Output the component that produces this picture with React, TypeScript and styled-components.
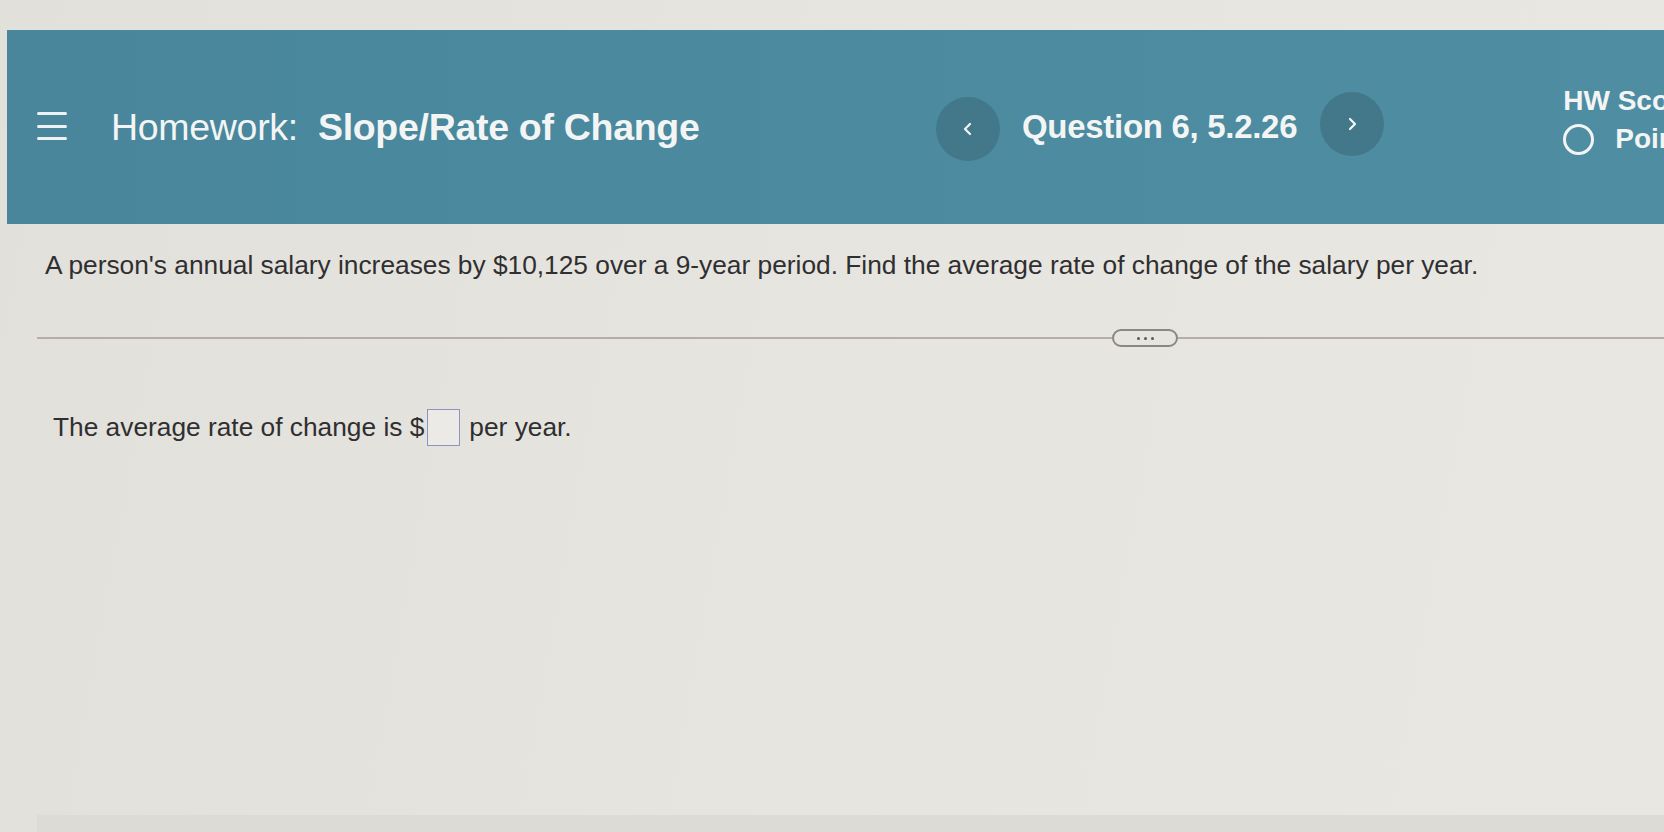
import React from "react";
import styled, { createGlobalStyle } from "styled-components";

const Global = createGlobalStyle`
  html, body {
    margin: 0;
    padding: 0;
    overflow: hidden;
    background: #e5e3de;
  }
  body {
    font-family: "Liberation Sans", Arial, sans-serif;
    color: #2f2f31;
  }
`;

const Page = styled.div`
  width: 1664px;
  height: 832px;
  display: flex;
  flex-direction: column;
  padding-top: 30px;
  box-sizing: border-box;
  background: linear-gradient(100deg, #e2e0db 0%, #e7e5e0 55%, #e9e7e2 100%);
`;

const Header = styled.header`
  margin-left: 7px;
  height: 194px;
  flex: none;
  display: grid;
  grid-template-columns: 929px auto auto;
  align-items: center;
  background: linear-gradient(90deg, #49869b 0%, #4b8a9f 50%, #4e8da2 100%);
  color: #f3f5f5;
  overflow: hidden;
`;

const LeftGroup = styled.div`
  display: flex;
  align-items: center;
  padding-left: 30px;
`;

const Hamburger = styled.div`
  width: 30px;
  height: 28px;
  display: flex;
  flex-direction: column;
  justify-content: space-between;
  margin-right: 44px;
  transform: translateY(-1px);
  span {
    display: block;
    height: 3px;
    background: #eef1f1;
    border-radius: 2px;
  }
`;

const Title = styled.h1`
  margin: 0;
  font-size: 37.5px;
  font-weight: 400;
  letter-spacing: -0.3px;
  white-space: nowrap;
  b {
    font-weight: 700;
    margin-left: 20px;
  }
`;

const Nav = styled.div`
  display: flex;
  align-items: center;
`;

const NavButton = styled.div<{ $shift?: number }>`
  width: 64px;
  height: 64px;
  border-radius: 50%;
  background: #43788a;
  display: flex;
  align-items: center;
  justify-content: center;
  transform: translateY(${(p) => p.$shift ?? 0}px);
`;

const QuestionLabel = styled.div`
  font-size: 33px;
  font-weight: 700;
  letter-spacing: -0.3px;
  margin: 0 23px 0 22px;
  white-space: nowrap;
`;

const Score = styled.div`
  margin-left: 179px;
  display: flex;
  flex-direction: column;
  gap: 6px;
  font-size: 28px;
  font-weight: 700;
  white-space: nowrap;
  transform: translateY(-7px);
`;

const ScoreRow = styled.div`
  display: flex;
  align-items: center;
  gap: 21px;
`;

const Radio = styled.span`
  width: 25px;
  height: 25px;
  border: 3px solid #f3f5f5;
  border-radius: 50%;
  display: inline-block;
`;

const Main = styled.main`
  flex: 1;
  display: flex;
  flex-direction: column;
  padding-left: 37px;
`;

const Prompt = styled.p`
  margin: 27px 0 0 8px;
  font-size: 26.3px;
  line-height: 28px;
  white-space: nowrap;
`;

const Divider = styled.div`
  margin-top: 50px;
  display: flex;
  align-items: center;
`;

const Rule = styled.div<{ $w?: string }>`
  height: 2px;
  background: #b7aca9;
  ${(p) => (p.$w ? `width: ${p.$w};` : "flex: 1;")}
`;

const MorePill = styled.div`
  width: 62px;
  height: 14px;
  border: 2px solid #8a8886;
  border-radius: 9px;
  display: flex;
  align-items: center;
  justify-content: center;
  gap: 4px;
  background: #e7e5e0;
  i {
    width: 3px;
    height: 3px;
    background: #5a5958;
    border-radius: 50%;
  }
`;

const Answer = styled.div`
  margin: 62px 0 0 16px;
  display: flex;
  align-items: center;
  font-size: 26.3px;
  white-space: nowrap;
`;

const InputBox = styled.span`
  width: 31px;
  height: 35px;
  border: 1.5px solid #8e93c2;
  margin: 0 9px 0 3px;
  display: inline-block;
  background: #eceae6;
`;

const Spacer = styled.div`
  flex: 1;
`;

const FooterBand = styled.div`
  height: 17px;
  background: #dcdbd6;
`;

const Chevron = ({ dir }: { dir: "left" | "right" }) => (
  <svg width="12" height="16" viewBox="0 0 12 16">
    <polyline
      points={dir === "left" ? "8,3 3,8 8,13" : "4,3 9,8 4,13"}
      fill="none"
      stroke="#f3f5f5"
      strokeWidth="2.2"
      strokeLinecap="round"
      strokeLinejoin="round"
    />
  </svg>
);

export default function App() {
  return (
    <>
      <Global />
      <Page>
        <Header>
          <LeftGroup>
            <Hamburger>
              <span />
              <span />
              <span />
            </Hamburger>
            <Title>
              Homework:<b>Slope/Rate of Change</b>
            </Title>
          </LeftGroup>
          <Nav>
            <NavButton $shift={2}>
              <Chevron dir="left" />
            </NavButton>
            <QuestionLabel>Question 6, 5.2.26</QuestionLabel>
            <NavButton $shift={-3}>
              <Chevron dir="right" />
            </NavButton>
          </Nav>
          <Score>
            <div>HW Score: 0%</div>
            <ScoreRow>
              <Radio />
              <span>Points: 0 of 1</span>
            </ScoreRow>
          </Score>
        </Header>
        <Main>
          <Prompt>
            A person's annual salary increases by $10,125 over a 9-year period.
            Find the average rate of change of the salary per year.
          </Prompt>
          <Divider>
            <Rule $w="1075px" />
            <MorePill>
              <i />
              <i />
              <i />
            </MorePill>
            <Rule />
          </Divider>
          <Answer>
            The average rate of change is $<InputBox />per year.
          </Answer>
          <Spacer />
          <FooterBand />
        </Main>
      </Page>
    </>
  );
}
